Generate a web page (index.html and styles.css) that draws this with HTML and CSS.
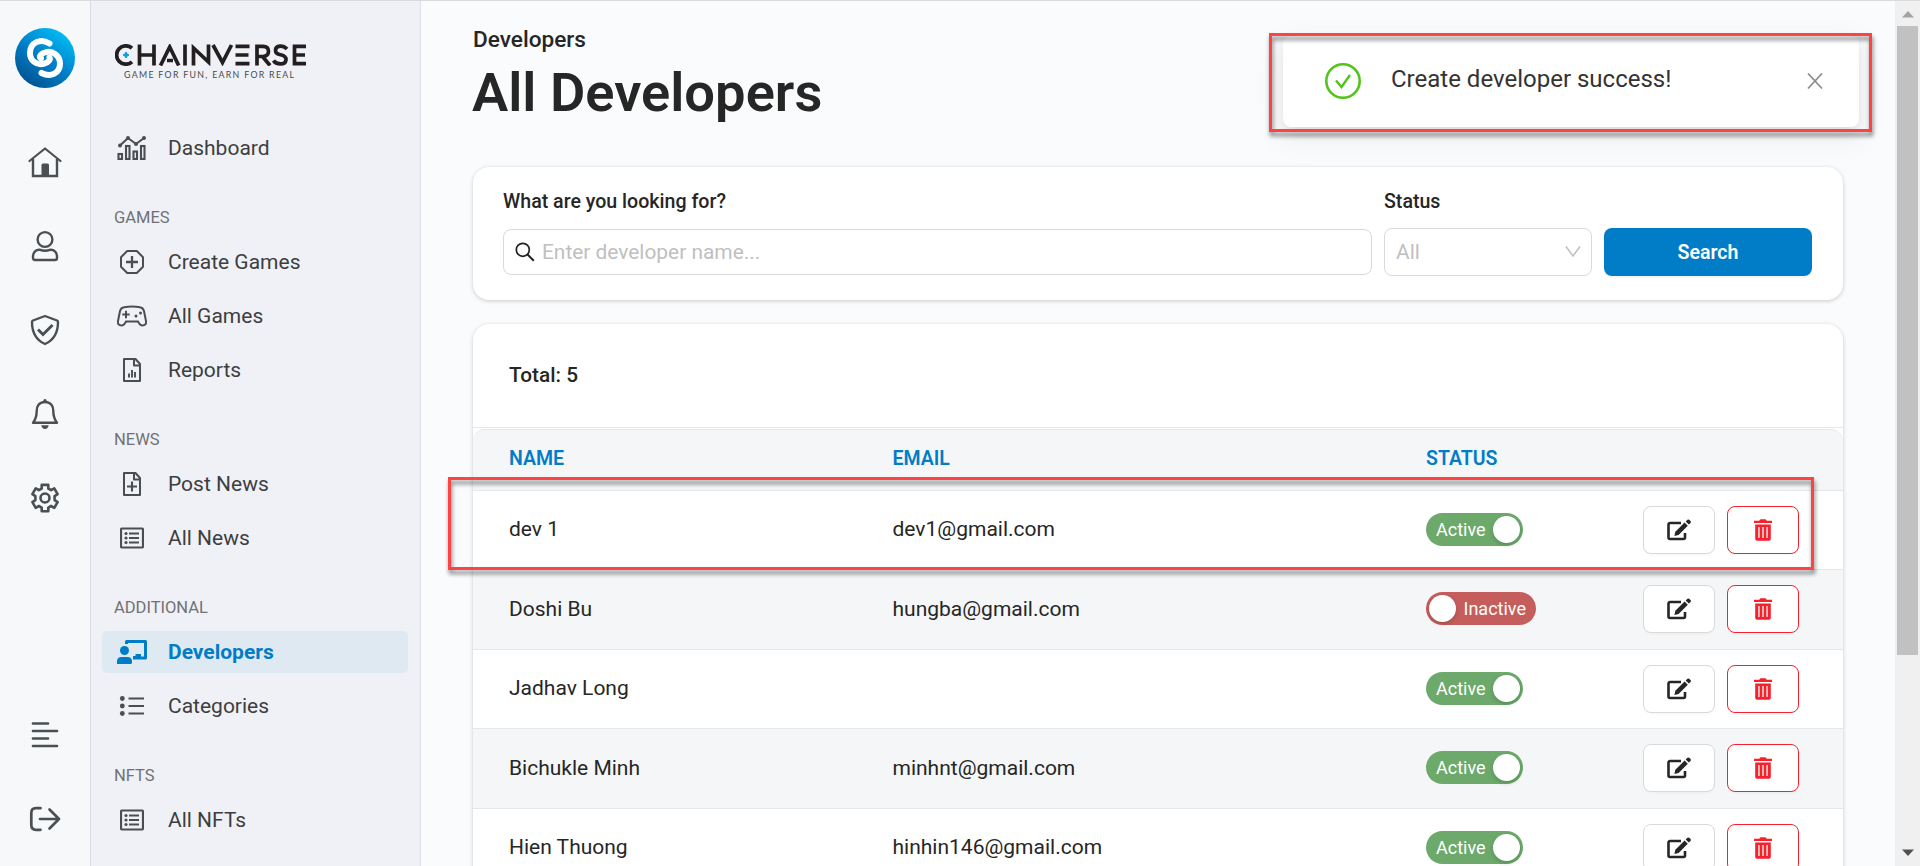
FILE: index.html
```html
<!DOCTYPE html>
<html lang="en">
<head>
<meta charset="utf-8">
<title>All Developers</title>
<link rel="stylesheet" href="styles.css">
</head>
<body>
<svg class="defs" width="0" height="0">
  <defs>
    <linearGradient id="brand" x1="0.85" y1="0.1" x2="0.25" y2="0.95">
      <stop offset="0" stop-color="#00bdf2"/><stop offset="0.5" stop-color="#0080cb"/><stop offset="1" stop-color="#005592"/>
    </linearGradient>
    <symbol id="edit" viewBox="0 0 24 22"><path d="M14 4H3.2Q1.5 4 1.5 5.5V18.500Q1.500 20 3 20H16.500Q18 20 18 18.500V14" fill="none" stroke="currentColor" stroke-width="2.600"/><path d="M17.600 3.600l3.200 3.200L11.600 16l-4.200 1 .9-4.200zM18.700 2.500l1.700-1.700q.9-.8 1.800 0l1.300 1.300q.8.9 0 1.800l-1.700 1.700z" fill="currentColor"/></symbol>
    <symbol id="trash" viewBox="0 0 18 22"><path fill-rule="evenodd" fill="currentColor" d="M0 1.700h5.200L6.500 .2h5l1.300 1.500H18V4H0zM1.200 5.400h15.600V20q0 1.800-1.800 1.800H3Q1.200 21.800 1.200 20zM4.300 8v11h1.300V8zm4.050 0v11h1.300V8zm4.050 0v11h1.300V8z"/></symbol>
    <symbol id="list" viewBox="0 0 24 22"><rect x="1" y="1.500" width="22" height="19" rx="1" fill="none" stroke="currentColor" stroke-width="2.200"/><path d="M9 6.500h10M9 11h10M9 15.500h10" stroke="currentColor" stroke-width="1.900"/><g fill="currentColor"><circle cx="6" cy="6.500" r="1.600"/><circle cx="6" cy="11" r="1.600"/><circle cx="6" cy="15.500" r="1.600"/></g></symbol>
  </defs>
</svg>
<div class="app">
  <nav class="rail">
    <svg class="rail-logo" viewBox="0 0 60 60"><circle cx="30" cy="30" r="30" fill="url(#brand)"/><g fill="none" stroke="#fff" stroke-width="6" stroke-linecap="round"><path d="M34.500 15.500C25 9.500 15.500 15 15 24.500 14.700 32 21 38 29.500 35.500 34 34 35.500 31.500 34.500 29.500"/><path d="M26.500 45C36 50 45 45 45 35.500 45 27.500 37.500 22 30 24.500 25 26 24 29 26 30.500"/></g></svg>
    <div class="rail-main">
      <svg viewBox="0 0 34 34"><path d="M1.500 16L17 3.500 32.500 16" fill="none" stroke="currentColor" stroke-width="2.200" stroke-linecap="round" stroke-linejoin="round"/><path d="M5 14V31H29V14" fill="none" stroke="currentColor" stroke-width="2.400"/><path d="M13.500 31V20q0-1.500 1.500-1.500h4.500q1.500 0 1.500 1.500V31z" fill="currentColor"/></svg>
      <svg viewBox="0 0 34 34"><g fill="none" stroke="currentColor" stroke-width="2.400"><circle cx="17" cy="10.500" r="7.400"/><path d="M12 20.800Q17 22.600 22 20.800C26.500 20.500 29 23.500 29 27.500V29Q29 31 27 31H7Q5 31 5 29V27.500C5 23.500 7.500 20.500 12 20.800z"/></g></svg>
      <svg viewBox="0 0 34 34"><path d="M17 3L29 7.500Q30 8 30 9C30 19 26 27 17 31 8 27 4 19 4 9Q4 8 5 7.500z" fill="none" stroke="currentColor" stroke-width="2.400" stroke-linejoin="round"/><path d="M10 16.500l5 5L24.500 12" fill="none" stroke="currentColor" stroke-width="2.900"/></svg>
      <svg viewBox="0 0 34 34"><path d="M17 5C10.500 5 8.700 10 8.700 14 8.700 20 7.500 22.500 5 25.800H29C26.500 22.500 25.300 20 25.300 14 25.300 10 23.500 5 17 5z" fill="none" stroke="currentColor" stroke-width="2.400" stroke-linejoin="round"/><path d="M15.400 5V3q1.600-2 3.200 0V5zM13.300 28.300h7.400Q20 32 17 32t-3.700-3.700z" fill="currentColor"/></svg>
      <svg viewBox="0 0 34 34"><g fill="none" stroke="currentColor" stroke-width="2.600" stroke-linejoin="round"><path d="M13.700 3.300h6.600v3.700l2.800 1.600 3.200-1.800 3.300 5.700-3 2v4l3 2-3.300 5.700-3.200-1.800-2.800 1.600v3.700h-6.600V26l-2.800-1.600-3.200 1.800-3.300-5.700 3-2v-4l-3-2 3.300-5.700 3.200 1.800 2.800-1.600z" transform="translate(0 .6)"/><circle cx="17" cy="17" r="4.500"/></g></svg>
    </div>
    <div class="rail-foot">
      <svg viewBox="0 0 34 34"><path d="M5 5.500h15M5 13h24M5 20.500h15M5 28h24" stroke="currentColor" stroke-width="2.700" stroke-linecap="round"/></svg>
      <svg viewBox="0 0 34 34"><path d="M12.500 6.200H8q-4.700 0-4.700 4.700v12.200q0 4.700 4.700 4.700h4.500M12 17h19M21.500 7.500L31 17l-9.500 9.500" fill="none" stroke="currentColor" stroke-width="2.700" stroke-linecap="round" stroke-linejoin="round"/></svg>
    </div>
  </nav>
  <aside class="side">
    <div class="brand">
      <svg viewBox="0 0 192 22" class="wordmark"><g fill="none" stroke="#231f20" stroke-width="3.700"><path d="M17 4.200A9.200 9.200 0 1 0 17 17.800"/><path d="M24.500 .5v21M39 .5v21M24.500 11H39"/><path d="M45.500 21.500L54.700 3l9 18.500M52 16.500h6"/><path d="M70 .5v21"/><path d="M78.500 21.500V4L93.500 18V.5"/><path d="M98 1L107.500 18.500 116.500 1"/><path d="M120.500 2.300h14M120.500 11h13M120.500 19.700h14"/><path d="M142 21.500V2.300h6q5.500 0 5.500 5T148 12.500h-5M147.500 12.500l7.500 9"/><path d="M172 5Q169 1.900 165 2.100 160.500 2.500 160.500 6.200 160.500 9.800 165.500 10.700 171.500 12 171 16 170.500 19.900 165.500 19.900 160.500 19.900 158.500 16.500"/><path d="M191 2.300H179.500V19.700H191M179.500 11H190"/></g><path d="M11 8l1 2 2 1-2 1-1 2-1-2-2-1 2-1z" fill="#009ee3" stroke="#009ee3"/></svg>
      <div class="tagline">GAME FOR FUN, EARN FOR REAL</div>
    </div>
    <div class="group">
      <a class="item"><svg viewBox="0 0 30 24"><g fill="none" stroke="currentColor" stroke-width="2.100"><rect x="1.500" y="18" width="3.500" height="5"/><rect x="9" y="10" width="3.500" height="13"/><rect x="16.500" y="15.500" width="3.500" height="7.500"/><rect x="24" y="10" width="3.500" height="13"/><path d="M3 9.500l8-7.500 8 6 8-6"/></g><g fill="currentColor"><circle cx="3" cy="9.500" r="2"/><circle cx="11" cy="2" r="2"/><circle cx="19" cy="8" r="2"/><circle cx="27" cy="2" r="2"/></g></svg>Dashboard</a>
    </div>
    <div class="label">GAMES</div>
    <div class="group">
      <a class="item"><svg viewBox="0 0 30 24"><path d="M10.200 1h9.600L26 7.200v9.600L19.800 23h-9.600L4 16.800V7.200z" fill="none" stroke="currentColor" stroke-width="2" stroke-linejoin="round"/><path d="M15 6v12M9 12h12" stroke="currentColor" stroke-width="2.300"/></svg>Create Games</a>
      <a class="item"><svg viewBox="0 0 30 24"><path d="M7 3.200Q15 1.800 23 3.200 26 3.500 27 7L29 17C29.500 20 28 21.500 25.500 21.500 23 21.500 22.500 20 21 17.500H9C7.500 20 7 21.500 4.500 21.500 2 21.500 .5 20 1 17L3 7Q4 3.500 7 3.200z" fill="none" stroke="currentColor" stroke-width="2"/><path d="M9 6.800v7.400M5.300 10.500h7.400" stroke="currentColor" stroke-width="2"/><circle cx="23.500" cy="9" r="1.500" fill="currentColor"/><circle cx="19" cy="12" r="1.500" fill="currentColor"/></svg>All Games</a>
      <a class="item"><svg viewBox="0 0 30 24"><path d="M7 1H18.500L23 6V23H7z M17 1v6.500h6" fill="none" stroke="currentColor" stroke-width="2" stroke-linejoin="round"/><path d="M12 15.500v4M15 12v7.500M18 14v5.500" stroke="currentColor" stroke-width="1.900"/></svg>Reports</a>
    </div>
    <div class="label">NEWS</div>
    <div class="group">
      <a class="item"><svg viewBox="0 0 30 24"><path d="M7 1H18.500L23 6V23H7z M17 1v6.500h6" fill="none" stroke="currentColor" stroke-width="2" stroke-linejoin="round"/><path d="M15 9.500v10M10 14.500h10" stroke="currentColor" stroke-width="2.100"/></svg>Post News</a>
      <a class="item"><svg viewBox="-3 -1 30 24"><use href="#list" width="24" height="22"/></svg>All News</a>
    </div>
    <div class="label">ADDITIONAL</div>
    <div class="group">
      <a class="item active"><svg viewBox="0 0 30 24"><path d="M9.500 4V1.500H28.500V18H16" fill="none" stroke="currentColor" stroke-width="3" stroke-linejoin="round"/><path d="M16 18v-2h2.500v-2H24v4zM0 24v-2.500Q0 17 4.500 17h6q4.500 0 4.500 4.500V22.500Q15 24 13.500 24z" fill="currentColor"/><circle cx="7.500" cy="10.500" r="4.500" fill="currentColor"/></svg>Developers</a>
      <a class="item"><svg viewBox="0 0 30 24"><path d="M11.500 4.500H27M11.500 12H27M11.500 19.500H27" stroke="currentColor" stroke-width="2.200"/><g fill="currentColor"><circle cx="5.300" cy="4.500" r="2.400"/><circle cx="5.300" cy="12" r="2.400"/><circle cx="5.300" cy="19.500" r="2.400"/></g></svg>Categories</a>
    </div>
    <div class="label">NFTS</div>
    <div class="group">
      <a class="item"><svg viewBox="-3 -1 30 24"><use href="#list" width="24" height="22"/></svg>All NFTs</a>
    </div>
  </aside>
  <main class="main">
    <div class="crumb">Developers</div>
    <h1 class="title">All Developers</h1>
    <section class="card filter">
      <div class="field grow"><label>What are you looking for?</label>
        <div class="input"><svg viewBox="0 0 20 20"><circle cx="7.800" cy="7.800" r="6.500" fill="none" stroke="currentColor" stroke-width="1.700"/><path d="M12.300 12.300l6.500 6.500" stroke="currentColor" stroke-width="2"/></svg><span>Enter developer name...</span></div></div>
      <div class="field"><label>Status</label>
        <div class="input select"><span>All</span><svg viewBox="0 0 16 14"><path d="M1 1.500l7 9.500 7-9.500" fill="none" stroke="currentColor" stroke-width="1.500"/></svg></div></div>
      <button class="search">Search</button>
    </section>
    <section class="card table">
      <div class="total">Total: 5</div>
      <div class="row head"><span>NAME</span><span>EMAIL</span><span>STATUS</span><span></span></div>
      <div class="row"><span>dev 1</span><span>dev1@gmail.com</span><div class="state"><span class="switch on">Active<i></i></span></div><div class="acts"><b class="btn"><svg class="e"><use href="#edit"/></svg></b><b class="btn del"><svg class="t"><use href="#trash"/></svg></b></div></div>
      <div class="row alt"><span>Doshi Bu</span><span>hungba@gmail.com</span><div class="state"><span class="switch off"><i></i>Inactive</span></div><div class="acts"><b class="btn"><svg class="e"><use href="#edit"/></svg></b><b class="btn del"><svg class="t"><use href="#trash"/></svg></b></div></div>
      <div class="row"><span>Jadhav Long</span><span></span><div class="state"><span class="switch on">Active<i></i></span></div><div class="acts"><b class="btn"><svg class="e"><use href="#edit"/></svg></b><b class="btn del"><svg class="t"><use href="#trash"/></svg></b></div></div>
      <div class="row alt"><span>Bichukle Minh</span><span>minhnt@gmail.com</span><div class="state"><span class="switch on">Active<i></i></span></div><div class="acts"><b class="btn"><svg class="e"><use href="#edit"/></svg></b><b class="btn del"><svg class="t"><use href="#trash"/></svg></b></div></div>
      <div class="row last"><span>Hien Thuong</span><span>hinhin146@gmail.com</span><div class="state"><span class="switch on">Active<i></i></span></div><div class="acts"><b class="btn"><svg class="e"><use href="#edit"/></svg></b><b class="btn del"><svg class="t"><use href="#trash"/></svg></b></div></div>
    </section>
  </main>
  <div class="scroll"><svg viewBox="0 0 12 8"><path d="M0 7.500L6 1l6 6.500z" fill="#a3a3a3"/></svg><div class="thumb"></div><svg viewBox="0 0 12 8"><path d="M0 .5L6 7l6-6.500z" fill="#505050"/></svg></div>
</div>
<div class="toast">
  <svg class="ok" viewBox="0 0 36 36"><circle cx="18" cy="18" r="16.700" fill="none" stroke="currentColor" stroke-width="2.600"/><path d="M11 17.500l5.500 6.500L25 12" fill="none" stroke="currentColor" stroke-width="2.400"/></svg>
  <span>Create developer success!</span>
  <svg class="x" viewBox="0 0 16 16"><path d="M1 .5l14 15M15 .5l-14 15" stroke="currentColor" stroke-width="1.700"/></svg>
</div>
<div class="mark mark-toast"></div>
<div class="mark mark-row"></div>
</body>
</html>
```
FILE: styles.css
```css
* { box-sizing: border-box; }
html { height: 866px; overflow: hidden; }
body { margin: 0; height: 866px; overflow: hidden; font-family: Roboto, "Liberation Sans", sans-serif; color: #262626; background: #fafbfd; }
.defs { position: absolute; }
.app { display: flex; height: 866px; border-top: 1px solid #dadbdd; overflow: hidden; }
.rail { width: 91px; flex: none; display: flex; flex-direction: column; align-items: center; background: #f6f8fa; border-right: 1px solid #d9dbde; padding: 27px 0 30px; color: #4b4f52; }
.rail-logo { width: 60px; height: 60px; }
.rail-main, .rail-foot { display: flex; flex-direction: column; gap: 50px; }
.rail-main { margin-top: 57px; }
.rail-foot { margin-top: auto; }
.rail-main svg, .rail-foot svg { width: 34px; height: 34px; display: block; }
.side { width: 330px; flex: none; background: #f0f1f6; border-right: 1px solid #dddfe2; padding: 43px 12px 0 11px; overflow: hidden; }
.brand { height: 83px; padding-left: 13px; }
.wordmark { width: 192px; height: 22px; display: block; }
.tagline { margin: 4px 0 0 9px; font: 400 8.800px/10px Lato, sans-serif; letter-spacing: 1.300px; color: #4a4a4a; white-space: nowrap; }
.group { display: flex; flex-direction: column; gap: 12px; }
.item { height: 42px; display: flex; align-items: center; padding-left: 15px; gap: 21px; border-radius: 5px; font-size: 21px; font-weight: 400; color: #3c3e40; }
.item svg { width: 30px; height: 24px; flex: none; color: #4b4e51; }
.item.active { background: #dfe9f2; color: #007dc6; font-weight: 700; }
.item.active svg { color: #007dc6; }
.label { height: 26px; line-height: 26px; margin: 36px 0 10px 12px; font-size: 16.500px; color: #6f7174; }
.main { flex: 1; min-width: 0; height: 865px; overflow: hidden; padding: 23px 52px 0 52px; }
.crumb { font-size: 22.600px; line-height: 32px; font-weight: 500; }
.title { margin: 0 0 0 -1px; height: 111px; font-size: 54.300px; line-height: 74px; font-weight: 600; }
.card { background: #fff; border-radius: 16px; box-shadow: 0 1px 4px rgba(0,0,0,.2); }
.filter { height: 133px; padding: 21px 31px 0 30px; display: flex; gap: 12px; }
.field { width: 208px; }
.field.grow { flex: 1; }
.field label { display: block; font-size: 19.600px; line-height: 28px; font-weight: 500; }
.input { margin-top: 13px; height: 46px; border: 1px solid #d9d9d9; border-radius: 8px; display: flex; align-items: center; padding: 0 11px; gap: 7px; font-size: 20.900px; color: #bfbfbf; }
.input svg { width: 20px; height: 20px; color: #222; }
.select { height: 48px; margin-top: 12px; justify-content: space-between; padding: 0 10px 0 11px; }
.select svg { width: 16px; height: 14px; color: #bfbfbf; }
.search { margin-top: 40px; width: 208px; height: 48px; border: 0; border-radius: 8px; background: #007dc6; color: #fff; font: 600 19.600px Roboto, sans-serif; box-shadow: 0 2px 0 rgba(0,0,0,.04); }
.table { margin-top: 24px; height: 600px; }
.total { height: 104px; padding: 0 36px; line-height: 103px; font-size: 20.800px; font-weight: 500; border-bottom: 1px solid #e7e8ea; }
.row { display: grid; grid-template-columns: 383.500px 533.500px 216.700px 1fr; align-items: center; height: 79.500px; padding-left: 36px; font-size: 21px; border-bottom: 1px solid #e4e6e9; }
.row > span { margin-top: -1px; }
.row.head { height: 61.600px; margin-top: 1px; padding-bottom: 1px; border-top: 1px solid #e7e8ea; background: #f4f6f8; border-radius: 12px 12px 0 0; color: #007dc6; font-size: 19.500px; font-weight: 600; }
.row.alt { background: #f4f6f8; }
.state { display: flex; margin-top: -1px; }
.acts { display: flex; gap: 12px; }
.btn { width: 72px; height: 48px; border: 1px solid #d9d9d9; border-radius: 8px; background: #fff; display: flex; align-items: center; justify-content: center; box-shadow: 0 2px 0 rgba(0,0,0,.02); }
.btn.del { border-color: #f5222d; color: #f5222d; }
.e { width: 24px; height: 22px; }
.t { width: 18px; height: 22px; }
.switch { display: flex; align-items: center; height: 33px; padding-bottom: 0; border-radius: 17px; color: #fff; font-size: 18px; line-height: 31px; justify-content: space-between; }
.switch i { width: 27px; height: 27px; border-radius: 50%; background: #fff; box-shadow: 0 2px 4px rgba(0,35,11,.2); }
.switch.on { width: 97px; padding: 0 3px 0 10px; background: #6ca96b; }
.switch.off { width: 110px; padding: 0 10px 0 3px; background: #c55d5c; }
.scroll { width: 25px; flex: none; background: #f0f0f0; display: flex; flex-direction: column; align-items: center; padding: 9px 0; }
.scroll svg { width: 12px; height: 8px; }
.thumb { width: 21px; height: 629px; margin: 8px 0 auto; background: #c1c1c1; }
.toast { position: absolute; left: 1283px; top: 36px; width: 576px; height: 91px; border-radius: 8px; background: #fff; display: flex; align-items: center; padding: 0 36px 2px 42px; box-shadow: 0 9px 28px 8px rgba(0,0,0,.04), 0 6px 16px rgba(0,0,0,.06), 0 3px 6px -4px rgba(0,0,0,.12); font-size: 24px; color: #333; }
.toast span { margin: -4px auto 0 30px; }
.ok { width: 36px; height: 36px; color: #52c41a; }
.x { width: 16px; height: 16px; color: #8c8c8c; }
.mark { position: absolute; border: 3px solid #ff4343; filter: drop-shadow(1px 4px 2px rgba(0,0,0,.5)); }
.mark-toast { left: 1269px; top: 33px; width: 603px; height: 99px; }
.mark-row { left: 448px; top: 477px; width: 1366px; height: 93px; }
```
